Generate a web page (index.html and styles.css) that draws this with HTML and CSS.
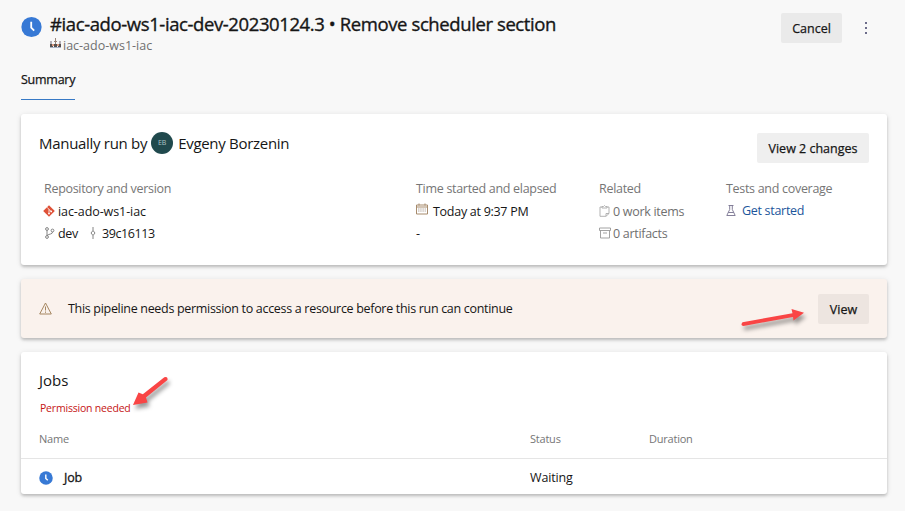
FILE: index.html
```html
<!DOCTYPE html>
<html lang="en">
<head>
<meta charset="utf-8">
<title>Pipeline run</title>
<link rel="stylesheet" href="styles.css">
</head>
<body>
<header class="header">
  <svg class="run-icon" viewBox="0 0 22 22"><circle cx="11" cy="11" r="10.6" fill="#3779d5"/><path d="M10.7 5.6v6l3.1 3.1" fill="none" stroke="#fff" stroke-width="1.9"/></svg>
  <div class="heading">
    <h1 class="title">#iac-ado-ws1-iac-dev-20230124.3 • Remove scheduler section</h1>
    <div class="subtitle">
      <svg class="sub-icon" viewBox="0 0 11 11"><path d="M0 3h2v3H0zM9 3h2v3H9z" fill="#b5b0b8"/><path d="M0 6h3v3H0zM4 6h3v3H4zM8 6h3v3H8z" fill="#55504f"/><path d="M5.500 0v6M4 3.500h3" stroke="#9a8478"/><path d="M2 6h2v2H2zM7 6h2v2H7z" fill="#dc9a80"/><path d="M0 9h11v1H0z" fill="#a9b2c6"/></svg>
      <span class="sub-text">iac-ado-ws1-iac</span>
    </div>
  </div>
  <button class="btn cancel">Cancel</button>
  <svg class="more" viewBox="0 0 4 14"><path d="M1 1h2v2H1zM1 6h2v2H1zM1 11h2v2H1z" fill="#6c6c8a"/></svg>
</header>
<nav class="tabs"><span class="tab">Summary</span></nav>
<main class="content">
  <section class="card summary">
    <div class="run-by">
      <span class="by">Manually run by</span><span class="avatar">EB</span><span class="person">Evgeny Borzenin</span>
      <button class="btn changes">View 2 changes</button>
    </div>
    <div class="details">
      <div class="col">
        <div class="label">Repository and version</div>
        <div class="line"><svg class="ico git" viewBox="0 0 12 12"><path d="M6 .2 11.800 6 6 11.800.2 6z" fill="#df5137"/><path d="M4.200 2.500 6 4.300v4.300M6 4.500l2.200 2" fill="none" stroke="#fff" stroke-width=".8"/><circle cx="6" cy="8.600" r=".9" fill="#fff"/><circle cx="8.200" cy="6.400" r=".9" fill="#fff"/></svg><span class="repo">iac-ado-ws1-iac</span></div>
        <div class="line"><svg class="ico branch" viewBox="0 0 12 12"><g fill="none" stroke="#777" stroke-width=".9"><circle cx="3" cy="2" r="1.400"/><circle cx="3" cy="10" r="1.400"/><circle cx="8.500" cy="3.500" r="1.400"/><path d="M3 3.400v5.200M8.500 5c0 2.500-3 1.500-5.500 3.500"/></g></svg><span>dev</span><svg class="ico commit" viewBox="0 0 8 12"><path d="M4 0v3.500M4 8.500V12M4 3.500 6 6 4 8.500 2 6z" fill="none" stroke="#777" stroke-width=".9"/></svg><span class="hash">39c16113</span></div>
      </div>
      <div class="col">
        <div class="label">Time started and elapsed</div>
        <div class="line"><svg class="ico cal" viewBox="0 0 12 11"><path d="M.5 1.500h11v9H.5zM.5 3.500h11M3 0v2M9 0v2" fill="none" stroke="#a78b6c"/><path d="M2 5.500h8M2 7.500h8" stroke="#b6aaa0" stroke-dasharray="1.500 .7"/></svg><span class="time">Today at 9:37 PM</span></div>
        <div class="line"><span class="dash">-</span></div>
      </div>
      <div class="col muted">
        <div class="label">Related</div>
        <div class="line"><svg class="ico clip" viewBox="0 0 11 12"><path d="M3 2H1v9.300h6l3-2.800V2H8M3 3V1.500h1.500l1-1 1 1H8V3zM7 11V8.500h3" fill="none" stroke="#aaa" stroke-width=".9"/></svg><span>0 work items</span></div>
        <div class="line"><svg class="ico arch" viewBox="0 0 12 11"><path d="M.5.500h11V3H.5zM1.500 3v7.500h9V3M4 5.500h4" fill="none" stroke="#999" stroke-width=".9"/></svg><span>0 artifacts</span></div>
      </div>
      <div class="col">
        <div class="label">Tests and coverage</div>
        <div class="line link"><svg class="ico flask" viewBox="0 0 10 11"><path d="M2.500.5h5M3.700.5v4L.8 10.500h8.400L6.300 4.500v-4M2.300 7.500h5.400" fill="none" stroke="#77728f" stroke-width=".9"/></svg><span>Get started</span></div>
      </div>
    </div>
  </section>
  <section class="card banner">
    <svg class="warn" viewBox="0 0 13 13"><path d="M6.500 1 12.300 12H.7z" fill="none" stroke="#a58660"/><path d="M6.500 4.500v4M6.500 9.500v1.300" stroke="#a58660"/></svg>
    <span class="message">This pipeline needs permission to access a resource before this run can continue</span>
    <button class="btn view">View</button>
    <svg class="arrow arrow-view" viewBox="0 0 74 30"><path d="M6.500 17.200 56.500 8.200 55.500 4 68 7.800 57.500 15.500 57 12 7.500 21Q4 20.500 6.500 17.200z" fill="#f94545"/></svg>
  </section>
  <section class="card jobs">
    <h2 class="jobs-title">Jobs</h2>
    <div class="needed"><span>Permission needed</span></div>
    <div class="row head"><span>Name</span><span>Status</span><span>Duration</span></div>
    <div class="row item"><span class="job"><svg class="job-icon" viewBox="0 0 22 22"><circle cx="11" cy="11" r="10.600" fill="#3779d5"/><path d="M10.700 5.600v6l3.100 3.100" fill="none" stroke="#fff" stroke-width="2.200"/></svg><span>Job</span></span><span>Waiting</span></div>
    <svg class="arrow arrow-jobs" viewBox="0 0 46 42"><path d="M35.300 5.200Q39 4 38.500 8L17 25.500 18.500 30.500 4 33 9.500 20.500 13.800 22.300z" fill="#f94545"/></svg>
  </section>
</main>
</body>
</html>
```

FILE: styles.css
```css
* { box-sizing: border-box; }
body {
  margin: 0;
  height: 511px;
  overflow: hidden;
  background: #f8f8f8;
  color: #161616;
  font: 12.5px/22px "Open Sans", "Noto Sans", sans-serif;
  letter-spacing: -.3px;
}
span { white-space: nowrap; }
svg { flex: none; display: block; }
.header { display: flex; height: 60px; padding: 13px 37px 0 21px; }
.run-icon { width: 21px; height: 22px; margin-top: 3px; }
.heading { flex: 1; margin-left: 8px; }
.title { margin: 0; font-size: 18.5px; font-weight: 400; line-height: 22px; letter-spacing: -.4px; white-space: nowrap; -webkit-text-stroke: .35px #161616; }
.subtitle { display: flex; height: 20px; line-height: 21px; color: #707070; letter-spacing: 0; }
.sub-icon { width: 11px; height: 11px; margin: 3px 2px 0 0; }
.btn { height: 30px; padding: 2px 0 0; border: 0; border-radius: 2px; background: #eaeaea; color: #161616; font: 400 12.5px/28px "Open Sans", "Noto Sans", sans-serif; letter-spacing: 0; white-space: nowrap; -webkit-text-stroke: .25px #161616; }
.cancel { width: 61px; }
.more { width: 4px; height: 14px; margin: 8px 0 0 22px; }
.tabs { height: 54px; padding-left: 21px; display: flex; }
.tab { height: 40px; width: 54px; line-height: 40px; border-bottom: 1px solid #3779c5; letter-spacing: -.25px; -webkit-text-stroke: .25px #161616; }
.content { display: flex; flex-direction: column; gap: 14px; padding: 0 18px 0 21px; }
.card { position: relative; border-radius: 3px; background: #fff; box-shadow: 0 2px 3px rgba(0,0,0,.2), 0 1px 6px rgba(0,0,0,.09); }
.summary { height: 151px; padding: 17px 18px; }
.run-by { display: flex; align-items: center; height: 24px; font-size: 15px; }
.avatar { width: 22px; height: 22px; margin: 0 5px 0 4px; border-radius: 50%; background: #20494d; color: #aec2c4; font-size: 7px; letter-spacing: 0; text-align: center; }
.changes { width: 112px; margin: 9px 0 0 auto; background: #efefef; }
.details { display: grid; grid-template-columns: 372px 183px 127px 1fr; margin: 22px 0 0 5px; }
.label { height: 22px; line-height: 24px; color: #767676; }
.line { display: flex; align-items: center; height: 22px; }
.line span { padding-top: 2px; }
.col .line:nth-child(2) { margin-top: 1px; }
.col .link.line { margin-top: 0; color: #1c559b; }
.muted { color: #707070; }
.ico { width: 12px; height: 12px; margin-right: 2px; }
.git { margin-left: -1px; margin-right: 3px; }
.repo { letter-spacing: -.08px; }
.hash { letter-spacing: -.4px; }
.branch { margin-right: 2px; }
.commit { width: 8px; margin: 0 5px 0 11px; }
.cal { margin: -4px 5px 0 0; }
.time { letter-spacing: -.28px; }
.clip { width: 11px; margin-right: 3px; }
.flask { width: 10px; height: 11px; margin: 0 6px 0 0; }
.banner { display: flex; align-items: center; height: 59px; padding: 0 18px; background: #faf2ed; }
.message { padding-top: 1px; letter-spacing: -.31px; }
.warn { width: 13px; height: 13px; margin-right: 16px; }
.view { width: 51px; margin-left: auto; background: #ede5e0; }
.arrow { position: absolute; filter: drop-shadow(2px 4px 2px rgba(0,0,0,.4)); }
.arrow-view { width: 74px; height: 30px; left: 715px; top: 26px; }
.arrow-jobs { width: 46px; height: 42px; left: 108px; top: 20px; }
.jobs { height: 142px; padding-top: 17px; }
.jobs-title { margin: 0 0 0 18px; font-size: 15px; font-weight: 400; line-height: 22px; letter-spacing: 0; }
.needed { margin: 7px 0 0 19px; height: 20px; line-height: 20px; color: #c51414; font-size: 10.5px; letter-spacing: -.2px; }
.row { display: grid; grid-template-columns: 491px 119px 1fr; padding-left: 18px; }
.head { height: 41px; line-height: 42px; font-size: 11px; letter-spacing: -.22px; color: #767676; border-bottom: 1px solid #e5e5e5; }
.item { height: 35px; line-height: 37px; letter-spacing: -.15px; }
.job { display: flex; align-items: center; -webkit-text-stroke: .3px #161616; }
.job-icon { width: 14px; height: 14px; margin-right: 11px; -webkit-text-stroke: 0; }
```
